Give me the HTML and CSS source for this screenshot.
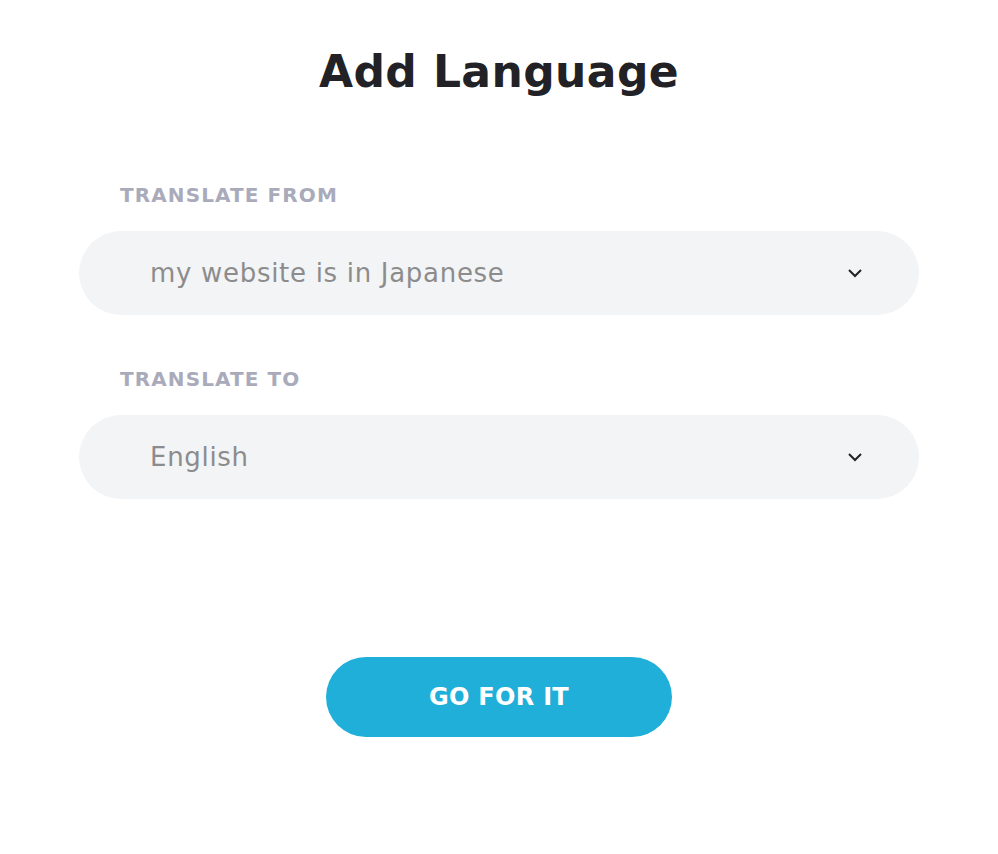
FILE: index.html
```html
<!DOCTYPE html>
<html>
<head>
<meta charset="utf-8">
<link rel="stylesheet" href="styles.css">
</head>
<body>
<div class="page">
  <h1 class="title">Add Language</h1>
  <div class="form">
    <div class="field">
      <label class="label">TRANSLATE FROM</label>
      <div class="select">
        <span class="value">my website is in Japanese</span>
        <svg class="chev" width="16" height="10" viewBox="0 0 16 10"><path d="M2 2 L8 8 L14 2" fill="none" stroke="#222" stroke-width="2"/></svg>
      </div>
    </div>
    <div class="field">
      <label class="label">TRANSLATE TO</label>
      <div class="select">
        <span class="value">English</span>
        <svg class="chev" width="16" height="10" viewBox="0 0 16 10"><path d="M2 2 L8 8 L14 2" fill="none" stroke="#222" stroke-width="2"/></svg>
      </div>
    </div>
  </div>
  <div class="actions">
    <button class="go">GO FOR IT</button>
  </div>
</div>
</body>
</html>
```
FILE: styles.css
```css
html, body { margin: 0; padding: 0; background: #fff; }
body { font-family: "DejaVu Sans", sans-serif; }
.page { width: 840px; margin: 0 auto; padding-top: 44px; }
.title {
  margin: 0;
  text-align: center;
  font-size: 44px;
  font-weight: bold;
  color: #222226;
  line-height: 56px;
  letter-spacing: 0.4px;
}
.form { margin-top: 83px; display: flex; flex-direction: column; gap: 52px; }
.field { display: flex; flex-direction: column; gap: 24px; }
.label {
  padding-left: 41px;
  font-size: 20px;
  font-weight: 600;
  color: #a9abbb;
  line-height: 24px;
  letter-spacing: 1.1px;
}
.select {
  height: 84px;
  border-radius: 42px;
  background: #f3f4f6;
  display: flex;
  align-items: center;
  padding: 0 56px 0 71px;
}
.value { flex: 1; font-size: 26px; color: #8c8c8c; letter-spacing: 0.7px; }
.chev { display: block; }
.actions { display: flex; justify-content: center; margin-top: 158px; }
.go {
  width: 346px;
  height: 80px;
  border: none;
  border-radius: 40px;
  background: #1fafd9;
  color: #fff;
  font-family: "DejaVu Sans", sans-serif;
  font-weight: bold;
  font-size: 24px;
  letter-spacing: 0.3px;
}
```
